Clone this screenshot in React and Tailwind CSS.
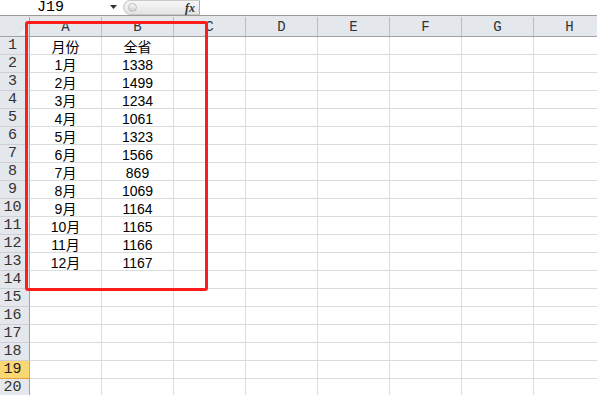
import React from "react";

const cols = ["A", "B", "C", "D", "E", "F", "G", "H"];
const data = [
  ["月份", "全省"],
  ["1月", "1338"],
  ["2月", "1499"],
  ["3月", "1234"],
  ["4月", "1061"],
  ["5月", "1323"],
  ["6月", "1566"],
  ["7月", "869"],
  ["8月", "1069"],
  ["9月", "1164"],
  ["10月", "1165"],
  ["11月", "1166"],
  ["12月", "1167"],
];

const mono = { fontFamily: '"Liberation Mono", "DejaVu Sans Mono", monospace' };
const cellFont = { fontFamily: '"Liberation Sans", "Noto Sans CJK SC", sans-serif' };

export default function App() {
  const rows = Array.from({ length: 20 }, (_, i) => i + 1);
  return (
    <div className="relative w-[597px] h-[395px] overflow-hidden bg-white">
      {/* formula bar */}
      <div className="flex h-[15px] bg-white">
        <div className="relative w-[123px] flex items-center">
          <span className="pl-[37px] text-[15px] leading-none text-black" style={mono}>J19</span>
          <svg className="absolute left-[110px] top-[5px]" width="7" height="4" viewBox="0 0 7 4">
            <path d="M0 0h7L3.5 4z" fill="#333" />
          </svg>
        </div>
        <div className="relative w-[77px] h-[15px] rounded-tl-[8px] rounded-bl-[8px] border border-r-[#aaa] border-[#c9c9c9] bg-gradient-to-b from-[#f7f7f7] to-[#e3e3e3] flex items-center">
          <div className="ml-[4px] w-[9px] h-[9px] rounded-full bg-gradient-to-b from-[#fafafa] to-[#cfcfcf] border border-[#bdbdbd]" />
          <span className="ml-auto mr-[4px] text-[12px] italic font-bold leading-none text-[#333]" style={{ fontFamily: '"Liberation Serif", serif' }}>fx</span>
        </div>
        <div className="flex-1" />
      </div>
      <div className="h-[1px] bg-[#9a9a9a]" />
      <div className="h-[1px] bg-[#e6e6e6]" />

      {/* column header */}
      <div className="flex h-[20px] bg-[#e4e7ec] border-b border-[#9ea3ab]">
        <div className="relative w-[30px] shrink-0 border-r border-[#9ea3ab]">
          <svg className="absolute right-[1px] bottom-[1px]" width="10" height="10" viewBox="0 0 10 10">
            <path d="M10 0V10H0z" fill="#f2f3f5" />
          </svg>
        </div>
        {cols.map((c) => (
          <div
            key={c}
            className="w-[72px] shrink-0 border-r border-[#b9bdc4] flex items-center justify-center text-[14px] text-[#333] leading-none"
            style={mono}
          >
            {c}
          </div>
        ))}
      </div>

      {/* rows */}
      {rows.map((r) => {
        const sel = r === 19;
        const d = data[r - 1];
        return (
          <div key={r} className="flex h-[18px]">
            <div
              className={
                "w-[30px] shrink-0 flex items-center justify-center pr-[4px] text-[15px] leading-none border-r " +
                (sel
                  ? "bg-[#f9d874] border-b border-[#e2a33c] border-r-[#e2a33c] text-[#222]"
                  : "bg-[#e4e7ec] border-b border-b-[#cdd1d7] border-r-[#9ea3ab] text-[#333]")
              }
              style={mono}
            >
              {r}
            </div>
            {cols.map((c, ci) => (
              <div
                key={c}
                className="w-[72px] shrink-0 border-r border-b border-[#dadcdd] flex items-center justify-center pt-[2px] text-[14px] leading-none text-black"
                style={cellFont}
              >
                {d && ci < 2 ? d[ci] : ""}
              </div>
            ))}
          </div>
        );
      })}

      {/* red annotation box */}
      <div className="absolute left-[25px] top-[21px] w-[183px] h-[270px] border-[3px] border-[#ff1c1c] rounded-[3px]" />
    </div>
  );
}
